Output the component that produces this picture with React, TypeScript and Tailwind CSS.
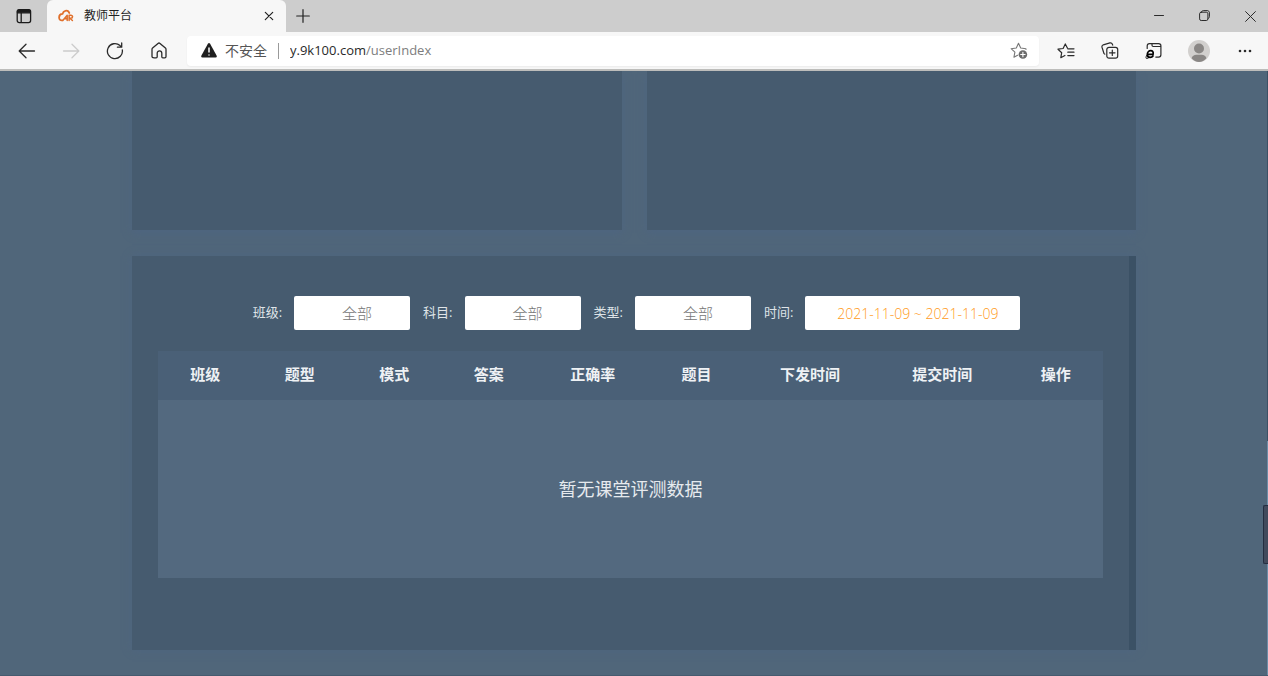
import type { ReactNode } from "react";

const STROKE = {
  fill: "none",
  stroke: "currentColor",
  strokeLinecap: "round" as const,
  strokeLinejoin: "round" as const,
};

function ToolButton({ label, children, className = "w-11" }: { label: string; children: ReactNode; className?: string }) {
  return (
    <button type="button" aria-label={label} className={`flex h-8 shrink-0 items-center justify-center text-[#2b2b2b] ${className}`}>
      {children}
    </button>
  );
}

function TabStrip() {
  return (
    <div className="flex h-8 items-stretch bg-[#cdcdcd]">
      <button type="button" aria-label="标签页操作" className="flex w-[47px] shrink-0 items-center justify-center text-[#1b1b1b]">
        <svg width="16" height="16" viewBox="0 0 16 16" {...STROKE} strokeWidth="1.3">
          <rect x="1.2" y="1.6" width="13.4" height="13" rx="2" />
          <path d="M1.5 4.8V3.4q0-1.6 1.6-1.6h9.6q1.6 0 1.6 1.6v1.4z" fill="currentColor" />
          <path d="M5.2 5v9.4" />
        </svg>
      </button>
      <div className="flex w-[239px] shrink-0 items-center rounded-t-md bg-[#f7f7f7] px-[11px]">
        <svg width="16" height="14" viewBox="0 0 16 14" {...STROKE} stroke="#e0702c" strokeWidth="1.5">
          <path d="M11.300 4C10.700 2.200 9 1.300 7.300 1.800 5.700 2.200 4.900 3.400 4.500 4.900 2.300 5 1.100 6.700 1.100 8.400c0 2.200 1.500 3.300 3.200 2.900" strokeWidth="1.800" />
          <path d="M4.800 11.500 9.200 6.300v5.200M7 9.800h2M11.100 11.500V6.300h1.700c2.400 0 2.300 3 0 3h-.9l2.500 2.200" />
        </svg>
        <span className="ml-2.5 flex-1 text-xs text-[#1f1f1f]">教师平台</span>
        <button type="button" aria-label="关闭标签页" className="flex size-3 items-center justify-center text-[#222222]">
          <svg width="10" height="10" viewBox="0 0 10 10" {...STROKE} strokeWidth="1.2">
            <path d="m1.300 1.300 7.400 7.400M8.700 1.300 1.300 8.700" />
          </svg>
        </button>
      </div>
      <button type="button" aria-label="新建标签页" className="flex w-[34px] shrink-0 items-center justify-center text-[#222222]">
        <svg width="14" height="14" viewBox="0 0 14 14" {...STROKE} strokeWidth="1.2">
          <path d="M7 .7v12.6M.7 7h12.6" />
        </svg>
      </button>
      <div className="flex-1" />
      <ToolButton label="最小化" className="w-[46px]">
        <svg width="10" height="10" viewBox="0 0 10 10" {...STROKE} strokeWidth="1">
          <path d="M.5 4.500h9" />
        </svg>
      </ToolButton>
      <ToolButton label="还原" className="w-[46px]">
        <svg width="12" height="12" viewBox="0 0 12 12" {...STROKE} strokeWidth="1">
          <rect x=".6" y="2.200" width="8.300" height="8.300" rx="1.600" />
          <path d="M2.600 1.900C2.800 1 3.400.6 4.300.6h3.900c1.300 0 2.200.9 2.200 2.200v3.900c0 .9-.4 1.500-1.300 1.700" />
        </svg>
      </ToolButton>
      <button type="button" aria-label="关闭" className="flex w-10 shrink-0 items-center justify-end pr-3 text-[#2b2b2b]">
        <svg width="11" height="11" viewBox="0 0 11 11" {...STROKE} strokeWidth="1">
          <path d="m.6.6 9.8 9.8M10.4.6.6 10.4" />
        </svg>
      </button>
    </div>
  );
}

function Toolbar() {
  return (
    <div className="flex h-[39px] items-center border-b-2 border-[#bdbdbb] bg-[#f7f7f7] pl-[5px]">
      <ToolButton label="后退">
        <svg width="18" height="16" viewBox="0 0 18 16" {...STROKE} strokeWidth="1.3">
          <path d="M16.5 8H1.5M8 1.2 1.2 8 8 14.8" />
        </svg>
      </ToolButton>
      <ToolButton label="前进">
        <svg width="18" height="16" viewBox="0 0 18 16" {...STROKE} stroke="#cccccc" strokeWidth="1.3">
          <path d="M1.5 8h15M10 1.2 16.8 8 10 14.8" />
        </svg>
      </ToolButton>
      <ToolButton label="刷新">
        <svg width="18" height="18" viewBox="0 0 18 18" {...STROKE} strokeWidth="1.3">
          <path d="M16.3 7.8A7.5 7.5 0 1 1 14 3.6l1.3 1.3M15.7.9v4.3h-4.3" />
        </svg>
      </ToolButton>
      <ToolButton label="主页">
        <svg width="16" height="17" viewBox="0 0 16 17" {...STROKE} strokeWidth="1.3">
          <path d="M1 7.4q0-.8.6-1.3l5.4-4.7q1-.8 2 0l5.4 4.7q.6.5.6 1.3v7.2q0 1.2-1.2 1.2h-2q-1 0-1-1v-3.6c0-3-4.6-3-4.6 0v3.6q0 1-1 1h-2Q1 15.8 1 14.6z" />
        </svg>
      </ToolButton>
      <div className="ml-1.5 mr-[5px] flex h-[30px] min-w-0 flex-1 items-center rounded bg-white pl-3.5 shadow-xs">
        <svg width="16" height="15" viewBox="0 0 16 15">
          <path d="M6.9.8Q8-.7 9.1.8L15.700 12.8Q16.200 14.5 14.600 14.5H1.4Q-.2 14.500.3 12.8z" fill="#1f1f1f" />
          <path d="M8 4.6v5M8 11.4v1" stroke="#ffffff" strokeWidth="1.5" />
        </svg>
        <span className="ml-2 shrink-0 text-sm text-[#555555]">不安全</span>
        <span className="mx-[11px] h-4 w-px bg-[#9a9a9a]" />
        <a href="#userIndex" className="min-w-0 flex-1 truncate text-[13px] text-[#2a2a2a]">
          y.9k100.com<span className="text-[#7d7d7d]">/userIndex</span>
        </a>
        <ToolButton label="添加到收藏夹" className="w-10">
          <svg width="18" height="18" viewBox="0 0 18 18" {...STROKE} stroke="#777777" strokeWidth="1.1">
            <path d="M16 7.4 15.900 6.700 10.700 6 8.500 1.300 6.300 6 1.100 6.700l3.800 3.500-1 5.100 3.700-2" />
            <circle cx="12.900" cy="12.500" r="4.300" fill="#6b6b6b" stroke="none" />
            <path d="M12.900 10.300v4.400M10.700 12.500h4.400" stroke="#ffffff" />
          </svg>
        </ToolButton>
      </div>
      <ToolButton label="收藏夹">
        <svg width="18" height="16" viewBox="0 0 18 16" {...STROKE} strokeWidth="1.2">
          <path d="M10.500 5.200 8.300.9 6.100 5.500 1 6.200l3.700 3.500-.9 5 4.100-2.200" />
          <path d="M10.800 5.800h6.200M10.800 9.200h6.200M10.800 12.600h6.200" />
        </svg>
      </ToolButton>
      <ToolButton label="集锦">
        <svg width="18" height="17" viewBox="0 0 18 17" {...STROKE} strokeWidth="1.2">
          <rect x="5.8" y="5.3" width="10.9" height="10.9" rx="2.2" />
          <path d="M11.300 8v5.500M8.500 10.800H14M3.800 12.200 2.900 11.300 1 5.200Q.6 3.400 2.300 2.800L8.900.9q1.800-.4 2.500 1.300l.3.900" />
        </svg>
      </ToolButton>
      <ToolButton label="在 IE 模式下重新加载">
        <svg width="18" height="18" viewBox="0 0 18 18" {...STROKE} strokeWidth="1.2">
          <path d="M2.200 6.500V3.800q0-2.200 2.200-2.200h9.200q2.300 0 2.300 2.200v9q0 2.300-2.300 2.300h-2.800M7 1.800v1.500q0 1.200 1.200 1.200h7.500" />
          <path d="M2.800 12.300h5.300c.5-2.600-.7-3.700-2.300-3.700-2 0-3.500 1.700-3.500 3.800 0 2 1.300 3 2.900 3 1.300 0 2.200-.5 2.800-1.400" stroke="#000000" strokeWidth="1.700" />
          <path d="M1.600 13.500c-.8 1.600-.9 2.900.1 3 .6.100 1.200-.2 1.900-.7" stroke="#000000" strokeWidth=".9" />
        </svg>
      </ToolButton>
      <ToolButton label="个人资料" className="w-[46px]">
        <svg width="22" height="22" viewBox="0 0 22 22">
          <circle cx="11" cy="11" r="11" fill="#d2d0ce" />
          <circle cx="11" cy="8.5" r="5" fill="#8a8785" />
          <path d="M3.600 18.200c.5-2.200 2.400-3.400 4.800-3.400h5.200c2.400 0 4.300 1.200 4.800 3.400A11 11 0 0 1 11 22a11 11 0 0 1-7.400-3.800z" fill="#8a8785" />
        </svg>
      </ToolButton>
      <ToolButton label="设置及其他" className="w-[46px]">
        <svg width="14" height="4" viewBox="0 0 14 4" fill="currentColor">
          <circle cx="2" cy="2" r="1.3" />
          <circle cx="7" cy="2" r="1.3" />
          <circle cx="12" cy="2" r="1.3" />
        </svg>
      </ToolButton>
    </div>
  );
}

function FilterSelect({ id, label }: { id: string; label: string }) {
  return (
    <div className="flex items-center gap-3">
      <label htmlFor={id} className="text-[13px] text-[#dfe4e8]">{label}:</label>
      <select
        id={id}
        className="h-[34px] w-[116px] appearance-none rounded-xs bg-white pl-2.5 text-center text-[15px] font-light text-[#777777] [text-align-last:center]"
      >
        <option>全部</option>
      </select>
    </div>
  );
}

const COLUMNS = [
  { title: "班级", width: "w-[10%]" },
  { title: "题型", width: "w-[10%]" },
  { title: "模式", width: "w-[10%]" },
  { title: "答案", width: "w-[10%]" },
  { title: "正确率", width: "w-[12%]" },
  { title: "题目", width: "w-[10%]" },
  { title: "下发时间", width: "w-[14%]" },
  { title: "提交时间", width: "w-[14%]" },
  { title: "操作", width: "w-[10%]" },
];

function ResultPanel() {
  return (
    <section className="border-r-[7px] border-[#3b5165] bg-[#465b6f] px-[26px] pb-[72px] pt-10 shadow-[0_0_8px_#4e6580]">
      <form className="flex justify-center gap-[13px] pl-3">
        <FilterSelect id="class" label="班级" />
        <FilterSelect id="subject" label="科目" />
        <FilterSelect id="type" label="类型" />
        <div className="flex items-center gap-3">
          <label htmlFor="range" className="text-[13px] text-[#dfe4e8]">时间:</label>
          <input
            id="range"
            readOnly
            value="2021-11-09 ~ 2021-11-09"
            className="h-[34px] w-[215px] rounded-xs bg-white pl-2.5 text-center text-sm font-light text-[#ff9a20]"
          />
        </div>
      </form>
      <table className="mt-[21px] w-full table-fixed border-collapse text-center">
        <thead>
          <tr className="h-[49px] bg-[#4a6077]">
            {COLUMNS.map((c) => (
              <th key={c.title} className={`p-0 pb-0.5 text-[15px] font-bold text-[#eef1f4] ${c.width}`}>{c.title}</th>
            ))}
          </tr>
        </thead>
        <tbody>
          <tr className="h-[178px] bg-[#53697f]">
            <td colSpan={COLUMNS.length} className="p-0 text-lg text-[#e6eaee]">暂无课堂评测数据</td>
          </tr>
        </tbody>
      </table>
    </section>
  );
}

export default function App() {
  return (
    <div className="flex min-h-screen flex-col bg-[#50667a] font-['Open_Sans','Noto_Sans_CJK_SC',sans-serif]">
      <header className="relative z-10">
        <TabStrip />
        <Toolbar />
      </header>
      <div className="relative flex flex-1 border-b border-[#465b6f]">
        <main className="flex-1 pb-[25px]">
          <div className="mx-auto flex w-[79.2%] flex-col gap-[26px]">
            <div className="grid grid-cols-2 gap-[25px]">
              <section className="h-[159px] bg-[#465b6f] shadow-[0_3px_8px_#4e6580]" />
              <section className="h-[159px] bg-[#465b6f] shadow-[0_3px_8px_#4e6580]" />
            </div>
            <ResultPanel />
          </div>
        </main>
        <div className="absolute inset-y-0 right-0 flex w-px flex-col">
          <div className="h-[370px] bg-[#3b5165]" />
          <div className="flex-1 bg-[#6b8ca6]" />
        </div>
        <div className="absolute right-0 top-[434px] h-[59px] w-[5px] rounded-l-xs border border-r-0 border-[#252e40] bg-[#414a5c]" />
      </div>
    </div>
  );
}
